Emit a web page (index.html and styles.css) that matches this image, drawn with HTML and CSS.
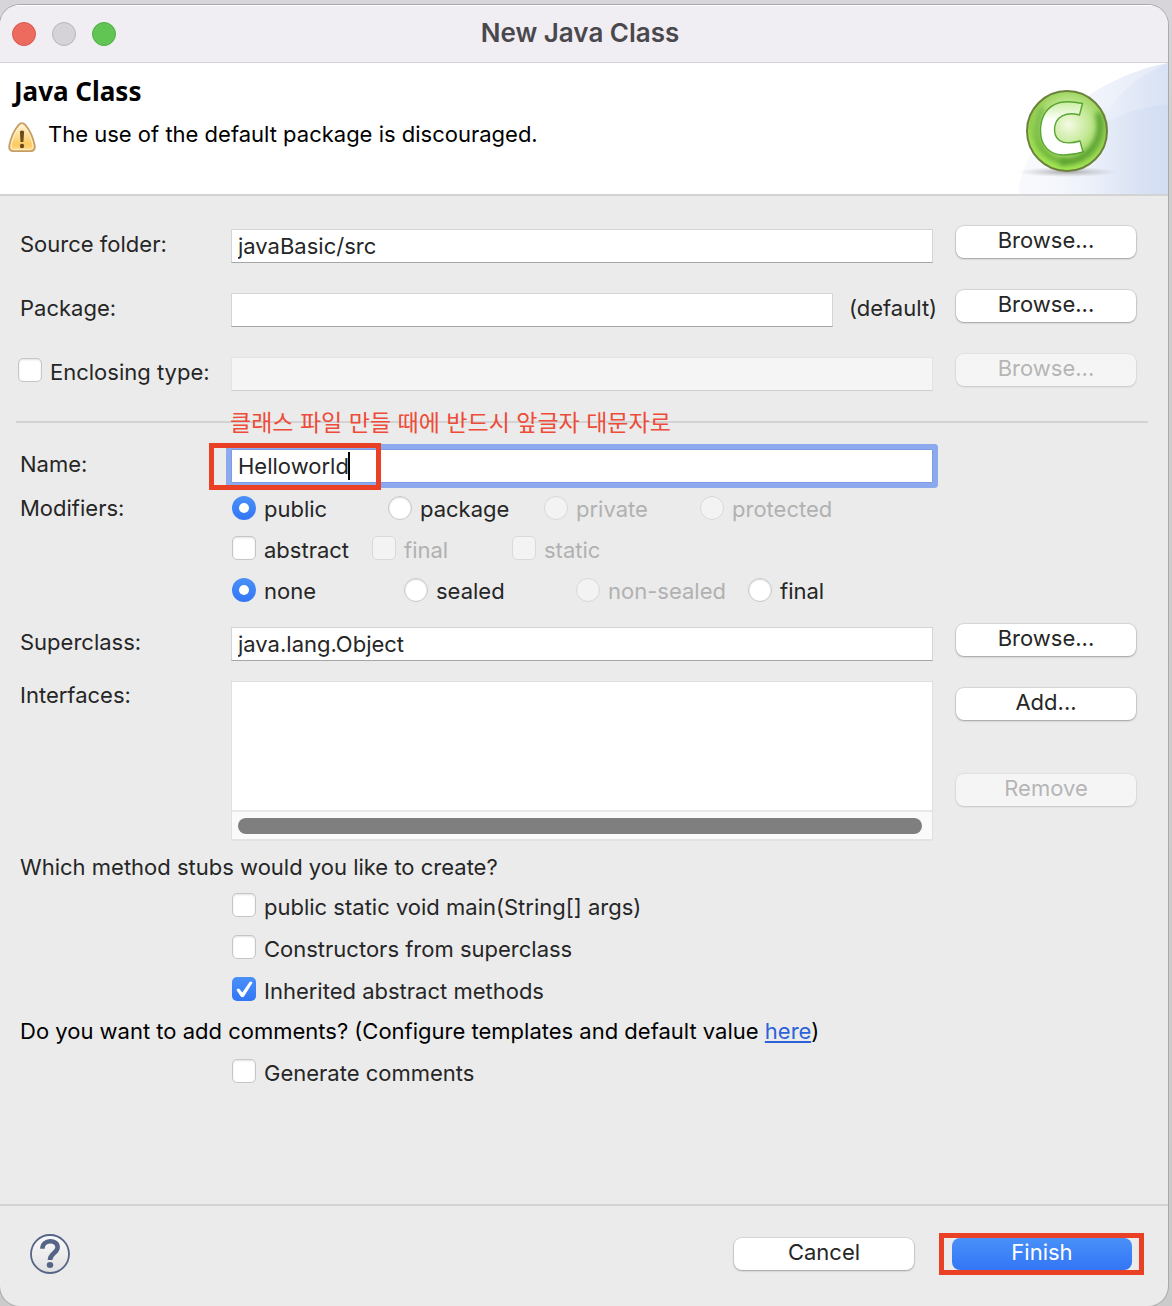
FILE: index.html
```html
<!DOCTYPE html>
<html lang="en">
<head>
  <meta charset="UTF-8" />
  <meta name="viewport" content="width=device-width, initial-scale=1.0"/>
  <title>New Java Class</title>
  <link rel="stylesheet" href="styles.css">
</head>
<body>

  <div class="window">
    <div class="titlebar">
      <div class="lights">
        <button class="light close" aria-label="Close"></button>
        <button class="light minimize" aria-label="Minimize" disabled></button>
        <button class="light zoom" aria-label="Zoom"></button>
      </div>
      <h1>New Java Class</h1>
    </div>

    <div class="banner">
      <div class="banner-text">
        <h2>Java Class</h2>
        <p class="message">
          <svg class="warning" viewBox="0 0 28 30" width="28" height="30">
            <defs>
              <linearGradient id="warn" x1="0" y1="0" x2="0" y2="1">
                <stop offset="0" stop-color="#fff6dc"/>
                <stop offset="0.75" stop-color="#fccb62"/>
                <stop offset="1" stop-color="#fddc92"/>
              </linearGradient>
            </defs>
            <path d="M10.5 3.2Q14 -1 17.5 3.2Q24 11 26.6 23Q27.6 29 23 29.2H5Q0.4 29 1.4 23Q4 11 10.5 3.2Z" fill="url(#warn)" stroke="#c79f66" stroke-width="1.8"/>
            <path d="M11 5.2Q14 1.5 17 5.2Q22.5 12 24.9 23Q25.5 27.2 22.5 27.4H5.5Q2.5 27.2 3.1 23Q5.5 12 11 5.2Z" fill="none" stroke="#fff3cf" stroke-width="1"/>
            <path d="M11.9 9.5Q14 7.5 16.1 9.5L15.4 20H12.6Z" fill="#6b4a1c"/>
            <circle cx="14" cy="24" r="2.2" fill="#6b4a1c"/>
          </svg>
          <span>The use of the default package is discouraged.</span>
        </p>
      </div>
      <svg class="banner-art" viewBox="0 0 168 131" width="168" height="131">
        <defs>
          <linearGradient id="sky" x1="0" y1="0" x2="1" y2="0">
            <stop offset="0" stop-color="#f8fafd"/>
            <stop offset="0.5" stop-color="#f1f4fb"/>
            <stop offset="1" stop-color="#e3e9f7"/>
          </linearGradient>
          <linearGradient id="wave" x1="0" y1="0" x2="1" y2="0">
            <stop offset="0" stop-color="#c9d7f0" stop-opacity="0"/>
            <stop offset="1" stop-color="#c9d7f0" stop-opacity="0.4"/>
          </linearGradient>
          <radialGradient id="ball" cx="0.52" cy="0.42" r="0.58">
            <stop offset="0" stop-color="#f4fbe4"/>
            <stop offset="0.45" stop-color="#c3e895"/>
            <stop offset="0.8" stop-color="#93cf50"/>
            <stop offset="1" stop-color="#a6ec55"/>
          </radialGradient>
          <linearGradient id="letter" x1="0" y1="0" x2="0" y2="1">
            <stop offset="0" stop-color="#c9efa0"/>
            <stop offset="0.35" stop-color="#ffffff"/>
            <stop offset="1" stop-color="#ffffff"/>
          </linearGradient>
          <radialGradient id="shadow">
            <stop offset="0" stop-color="#777" stop-opacity="0.6"/>
            <stop offset="1" stop-color="#999" stop-opacity="0"/>
          </radialGradient>
          <filter id="soft" x="-30%" y="-30%" width="160%" height="160%"><feGaussianBlur stdDeviation="2.5"/></filter>
        </defs>
        <path d="M168 0C110 10 25 60 18 131H168Z" fill="url(#sky)"/>
        <path d="M168 0C135 14 112 34 100 64L90 131H168Z" fill="url(#wave)"/>
        <path d="M168 41C140 44 115 53 95 64L60 131H168Z" fill="url(#wave)"/>
        <ellipse cx="67" cy="109" rx="50" ry="5" fill="url(#shadow)"/>
        <circle cx="67" cy="68" r="40" fill="url(#ball)"/>
        <path d="M98 50Q105 72 89 89Q76 100 60 99" fill="none" stroke="#4a9426" stroke-width="6" opacity="0.85" filter="url(#soft)"/>
        <path d="M43 45Q33 65 41 84Q50 98 66 98" fill="none" stroke="#4f9f28" stroke-width="4" opacity="0.7" filter="url(#soft)"/>
        <path d="M82.5 40.5Q69 37.5 60 39.5C46 43 40.5 55 40.5 68C40.5 83 50 92 64 92Q74 92 83 89L80 78C68 81.5 55 81 54.5 67C54.5 53 67 48.5 79.5 52Z" fill="url(#letter)" stroke="#58a52f" stroke-width="1.4" stroke-linejoin="round"/>
        <circle cx="67" cy="68" r="40" fill="none" stroke="#6c813c" stroke-width="2"/>
      </svg>
    </div>

    <form class="form">
      <div class="row">
        <label for="source">Source folder:</label>
        <input class="field" type="text" id="source" value="javaBasic/src">
        <button type="button" class="btn">Browse...</button>
      </div>

      <div class="row">
        <label for="package">Package:</label>
        <div class="package">
          <input class="field" type="text" id="package">
          <span class="default">(default)</span>
        </div>
        <button type="button" class="btn">Browse...</button>
      </div>

      <div class="row">
        <label class="option enclosing"><input type="checkbox"><span>Enclosing type:</span></label>
        <input class="field" type="text" aria-label="Enclosing type" disabled>
        <button type="button" class="btn" disabled>Browse...</button>
      </div>

      <hr class="separator">

      <div class="row name-row">
        <label for="name">Name:</label>
        <input class="field focused" type="text" id="name" value="Helloworld">
        <span class="note" lang="ko">클래스 파일 만들 때에 반드시 앞글자 대문자로</span>
        <span class="mark name-mark"><span class="caret"></span></span>
      </div>

      <div class="row modifiers">
        <span class="label">Modifiers:</span>
        <div class="options access">
          <label class="option"><input type="radio" name="access" checked><span>public</span></label>
          <label class="option"><input type="radio" name="access"><span>package</span></label>
          <label class="option"><input type="radio" name="access" disabled><span>private</span></label>
          <label class="option"><input type="radio" name="access" disabled><span>protected</span></label>
        </div>
        <div class="options flags">
          <label class="option"><input type="checkbox"><span>abstract</span></label>
          <label class="option"><input type="checkbox" disabled><span>final</span></label>
          <label class="option"><input type="checkbox" disabled><span>static</span></label>
        </div>
        <div class="options sealing">
          <label class="option"><input type="radio" name="sealing" checked><span>none</span></label>
          <label class="option"><input type="radio" name="sealing"><span>sealed</span></label>
          <label class="option"><input type="radio" name="sealing" disabled><span>non-sealed</span></label>
          <label class="option"><input type="radio" name="sealing"><span>final</span></label>
        </div>
      </div>

      <div class="row superclass">
        <label for="superclass">Superclass:</label>
        <input class="field" type="text" id="superclass" value="java.lang.Object">
        <button type="button" class="btn">Browse...</button>
      </div>

      <div class="row interfaces">
        <label for="interfaces">Interfaces:</label>
        <div class="list">
          <textarea id="interfaces"></textarea>
          <div class="scrollbar"><div class="thumb"></div></div>
        </div>
        <div class="list-buttons">
          <button type="button" class="btn">Add...</button>
          <button type="button" class="btn" disabled>Remove</button>
        </div>
      </div>

      <p class="question">Which method stubs would you like to create?</p>
      <div class="stubs">
        <label class="option"><input type="checkbox"><span>public static void main(String[] args)</span></label>
        <label class="option"><input type="checkbox"><span>Constructors from superclass</span></label>
        <label class="option"><input type="checkbox" checked><span>Inherited abstract methods</span></label>
      </div>

      <p class="question comments">Do you want to add comments? (Configure templates and default value <a href="#">here</a>)</p>
      <div class="stubs">
        <label class="option"><input type="checkbox"><span>Generate comments</span></label>
      </div>
    </form>

    <div class="footer">
      <button class="help" aria-label="Help">
        <svg viewBox="0 0 40 40" width="40" height="40">
          <defs>
            <linearGradient id="helpfill" x1="0" y1="0" x2="0" y2="1">
              <stop offset="0" stop-color="#fbfbfb"/>
              <stop offset="1" stop-color="#e0e0e0"/>
            </linearGradient>
          </defs>
          <circle cx="20" cy="20" r="19" fill="url(#helpfill)" stroke="#566587" stroke-width="1.8"/>
          <path d="M12.4 14.8C12.4 5 27.6 5 27.6 13.2C27.6 19 20 19 20 26" fill="none" stroke="#566587" stroke-width="4.6"/>
          <ellipse cx="20" cy="31" rx="3.3" ry="3" fill="#566587"/>
        </svg>
      </button>
      <button class="btn">Cancel</button>
      <span class="mark finish-mark"><button class="btn primary">Finish</button></span>
    </div>
  </div>

</body>
</html>
```
FILE: styles.css
```css
* {
  box-sizing: border-box;
}

body {
  font-family: Inter, "Noto Sans CJK KR", sans-serif;
  font-size: 22px;
  line-height: 28px;
  color: #262626;
  display: flex;
  min-height: 100vh;
  margin: 0;
  padding: 5px 4px 0 0;
  background: linear-gradient(#d7d5da, #cfcfcf 10%, #cbcbcb);
}

h1, h2, p {
  margin: 0;
}

input, button, textarea {
  font: inherit;
  color: inherit;
  margin: 0;
}

.window {
  flex: 1;
  display: flex;
  flex-direction: column;
  background: #ebebeb;
  border-radius: 20px;
  overflow: hidden;
  box-shadow: 0 0 0 1px #a9a8ab;
}

.titlebar {
  display: grid;
  grid-template-columns: 1fr auto 1fr;
  align-items: center;
  height: 58px;
  padding: 0 12px;
  background: #f0edf3;
  border-top: 1px solid #fff;
  border-bottom: 1px solid #d6d3d8;
}

.titlebar h1 {
  font-size: 26px;
  font-weight: 600;
  color: #4a484c;
  padding: 0 8px 2px 0;
}

.lights {
  display: flex;
  gap: 16px;
}

.light {
  width: 24px;
  height: 24px;
  padding: 0;
  border-radius: 50%;
}

.close {
  background: #ed6a5e;
  border: 1px solid #d9574c;
}

.minimize {
  background: #d5d3d8;
  border: 1px solid #b7b4ba;
}

.zoom {
  background: #61c554;
  border: 1px solid #50ae43;
}

.banner {
  display: flex;
  justify-content: space-between;
  background: #fff;
  border-bottom: 2px solid #d3d3d3;
}

.banner-text {
  padding: 14px 0 0 8px;
  color: #000;
}

.banner h2 {
  font-family: "Noto Sans", sans-serif;
  font-size: 26px;
  font-weight: 700;
  padding-left: 6px;
}

.message {
  display: flex;
  gap: 12px;
  padding-top: 15px;
}

.warning {
  margin-top: 2px;
}

.banner-art {
  display: block;
}

.form {
  flex: 1;
  padding: 29px 32px 0 18px;
}

.row {
  display: grid;
  grid-template-columns: 213px 1fr 203px;
  align-items: center;
  margin-bottom: 26px;
}

.row > label:not(.option), .label, .question {
  padding-left: 2px;
}

.field {
  width: 100%;
  height: 34px;
  min-width: 0;
  padding: 0 6px;
  background: #fff;
  border: 1px solid #d4d4d4;
  border-bottom-color: #a6a6a6;
  outline: none;
  align-self: end;
}

.field:disabled {
  background: #f5f5f5;
  border-color: #e4e4e4;
  border-bottom-color: #cfcfcf;
}

.btn {
  width: 180px;
  height: 32px;
  padding: 0 0 4px;
  line-height: 28px;
  border: none;
  border-radius: 8px;
  background: #fff;
  box-shadow: 0 0 1px 1px rgba(0, 0, 0, 0.09), 0 1px 2px rgba(0, 0, 0, 0.25);
}

.btn:disabled {
  background: #f5f5f5;
  color: #b5b5b5;
  box-shadow: 0 0 1px 1px rgba(0, 0, 0, 0.04), 0 1px 2px rgba(0, 0, 0, 0.12);
}

.row .btn {
  justify-self: end;
  align-self: start;
  margin: 1px 0 5px;
}

.package {
  display: flex;
  align-items: center;
  gap: 16px;
  align-self: end;
}

.default {
  flex: 0 0 84px;
  min-width: 0;
  padding-bottom: 4px;
  white-space: nowrap;
}

.option {
  display: flex;
  align-items: center;
  gap: 8px;
  white-space: nowrap;
}

.option span {
  padding-top: 2px;
}

.option input {
  appearance: none;
  flex: none;
  width: 24px;
  height: 24px;
  background: #fff;
  border: 1px solid #c6c6c6;
  border-radius: 5px;
  box-shadow: inset 0 1px 2px rgba(0, 0, 0, 0.12);
}

.option input[type="radio"] {
  border-radius: 50%;
}

.option input[type="checkbox"] {
  margin-bottom: 2px;
}

.option input:checked {
  border: none;
  background: linear-gradient(#4a90f8, #3276f6);
  box-shadow: none;
  display: grid;
  place-items: center;
}

.option input[type="radio"]:checked::before {
  content: "";
  width: 10px;
  height: 10px;
  border-radius: 50%;
  background: #fff;
}

.option input[type="checkbox"]:checked::before {
  content: "";
  width: 18px;
  height: 18px;
  background: #fff;
  clip-path: path("M1.5 10Q2.5 7.5 4.5 9L7.3 12.5L14.5 2Q16.5 0.5 17.5 2.8L9 16.5Q7.3 18 5.8 16.5Z");
}

.option input:disabled {
  background: #f3f3f3;
  border-color: #d9d9d9;
  box-shadow: none;
}

.option input:disabled + span {
  color: #b1b1b1;
}

.enclosing {
  padding-bottom: 2px;
}

.separator {
  height: 2px;
  margin: 30px -12px 26px -2px;
  border: none;
  background: #d3d3d3;
}

.name-row {
  position: relative;
  margin-bottom: 4px;
}

.name-row label {
  padding-bottom: 4px;
}

.field.focused {
  border-color: #7d9de6;
  box-shadow: 0 0 0 5px #8ca9ee;
  border-radius: 1px;
}

/* review notes drawn over the form */
.note {
  position: absolute;
  left: 212px;
  top: -42px;
  font-size: 23px;
  line-height: 32px;
  color: #ee4b38;
  white-space: nowrap;
}

.mark {
  border: 5px solid #ea4025;
}

.name-mark {
  position: absolute;
  left: 191px;
  top: -6px;
  width: 172px;
  height: 47px;
  pointer-events: none;
}

.caret {
  position: absolute;
  right: 26px;
  top: 4px;
  width: 2px;
  height: 28px;
  background: #000;
}

.modifiers {
  margin-bottom: 13px;
}

.options {
  grid-column: 2 / 4;
  display: grid;
  height: 41px;
  align-items: center;
  padding-left: 1px;
}

.access {
  grid-template-columns: repeat(4, 156px);
}

.flags {
  grid-template-columns: repeat(3, 140px);
}

.sealing {
  grid-template-columns: repeat(4, 172px);
}

.superclass {
  margin-bottom: 20px;
}

.interfaces {
  align-items: start;
  margin-bottom: 8px;
}

.list {
  background: #fff;
  border: 1px solid #dfdfdf;
  border-bottom: 2px solid #e3e3e3;
}

.list textarea {
  display: block;
  width: 100%;
  height: 128px;
  padding: 4px 6px;
  border: none;
  outline: none;
  resize: none;
  background: transparent;
}

.scrollbar {
  padding: 6px 10px 5px 6px;
  background: #fafafa;
  border-top: 2px solid #e8e8e8;
}

.thumb {
  height: 16px;
  border-radius: 8px;
  background: #7f7f7f;
}

.list-buttons {
  display: flex;
  flex-direction: column;
  align-items: flex-end;
  gap: 48px;
  padding-top: 6px;
}

.list-buttons .btn {
  align-self: flex-end;
}

.question {
  line-height: 36px;
}

.comments {
  line-height: 40px;
  color: #000;
}

.question a {
  color: #2b62d9;
}

.stubs {
  padding-left: 214px;
}

.stubs .option {
  height: 42px;
}

.footer {
  display: flex;
  align-items: center;
  height: 102px;
  padding: 0 24px 4px 30px;
  border-top: 2px solid #d3d3d3;
}

.help {
  display: flex;
  padding: 0;
  margin-right: auto;
  border: none;
  background: none;
}

.finish-mark {
  display: flex;
  margin-left: 25px;
  padding: 0 7px 0 8px;
}

.primary {
  color: #fff;
  background: linear-gradient(#4a90f8, #3276f6);
  box-shadow: none;
}
```
